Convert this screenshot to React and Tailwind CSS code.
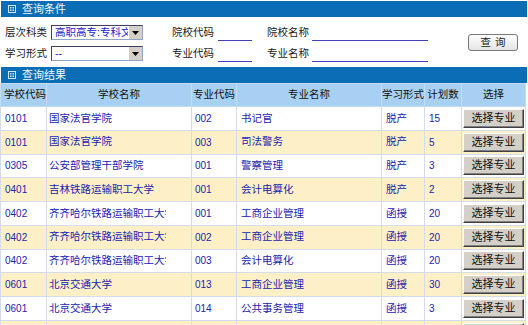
import React from "react";

const rows = [
  ["0101", "国家法官学院", "002", "书记官", "脱产", "15"],
  ["0101", "国家法官学院", "003", "司法警务", "脱产", "5"],
  ["0305", "公安部管理干部学院", "001", "警察管理", "脱产", "3"],
  ["0401", "吉林铁路运输职工大学", "001", "会计电算化", "脱产", "2"],
  ["0402", "齐齐哈尔铁路运输职工大学", "001", "工商企业管理", "函授", "20"],
  ["0402", "齐齐哈尔铁路运输职工大学", "002", "工商企业管理", "函授", "20"],
  ["0402", "齐齐哈尔铁路运输职工大学", "003", "会计电算化", "函授", "20"],
  ["0601", "北京交通大学", "013", "工商企业管理", "函授", "30"],
  ["0601", "北京交通大学", "014", "公共事务管理", "函授", "3"],
  ["0601", "北京交通大学", "015", "工商企业管理", "函授", "3"],
];

function BoxIcon() {
  return (
    <svg width="8" height="8" viewBox="0 0 8 8" className="shrink-0">
      <rect x="0.5" y="0.5" width="7" height="7" fill="none" stroke="#cfe3f5" strokeWidth="1" />
      <rect x="2" y="2" width="4" height="4" fill="#cfe3f5" />
      <line x1="4" y1="1" x2="4" y2="7" stroke="#0a6db5" strokeWidth="1" />
      <line x1="1" y1="4" x2="7" y2="4" stroke="#0a6db5" strokeWidth="1" />
    </svg>
  );
}

function Bar({ title }) {
  return (
    <div className="mx-[1px] h-[16px] bg-[#0a6db5] flex items-center gap-[6px] pl-[7px] text-[11px] leading-none">
      <BoxIcon />
      <span className="text-[#f0f6fc]">{title}</span>
    </div>
  );
}

function Select({ value }) {
  return (
    <div className="shrink-0 w-[92px] h-[15px] border border-[#8fa6c8] border-t-[#404060] border-l-[#404060] bg-white flex items-stretch overflow-hidden">
      <div className="flex-1 overflow-hidden whitespace-nowrap text-[10.5px] leading-[13px] text-[#2020d0] pl-[3px]">
        {value}
      </div>
      <div className="w-[14px] bg-[#d4d0c8] border-l border-[#ffffff] flex items-center justify-center">
        <svg width="7" height="4" viewBox="0 0 7 4">
          <path d="M0 0 H7 L3.5 4 Z" fill="#000" />
        </svg>
      </div>
    </div>
  );
}

function Line({ w }) {
  return <div className={`${w} shrink-0 h-[16px] border-b border-[#4040c0]`} />;
}

function Label({ w, ml, children }) {
  return <span className={`${w} ${ml} shrink-0 whitespace-nowrap`}>{children}</span>;
}

export default function App() {
  return (
    <div
      className="w-[528px] h-[325px] overflow-hidden bg-white pt-[1px]"
      style={{ fontFamily: '"Liberation Sans", "Noto Sans CJK SC", sans-serif' }}
    >
      <Bar title="查询条件" />
      <div className="h-[50px] flex items-center text-[10.5px] text-[#202020]">
        <div className="flex flex-col gap-[6px] pl-[5px] pt-[2px]">
          <div className="flex items-center h-[15px]">
            <Label w="w-[46px]" ml="">层次科类</Label>
            <Select value="高职高专:专科文史" />
            <Label w="w-[46px]" ml="ml-[29px]">院校代码</Label>
            <Line w="w-[34px]" />
            <Label w="w-[45px]" ml="ml-[15px]">院校名称</Label>
            <Line w="w-[116px]" />
          </div>
          <div className="flex items-center h-[15px]">
            <Label w="w-[46px]" ml="">学习形式</Label>
            <Select value="--" />
            <Label w="w-[46px]" ml="ml-[29px]">专业代码</Label>
            <Line w="w-[34px]" />
            <Label w="w-[45px]" ml="ml-[15px]">专业名称</Label>
            <Line w="w-[116px]" />
          </div>
        </div>
        <button className="ml-[40px] w-[50px] h-[17px] rounded-[3px] border border-[#7a7a7a] bg-gradient-to-b from-[#ffffff] to-[#e4e4e4] text-[10.5px] leading-none text-[#202020] tracking-[4px] pl-[4px]">
          查询
        </button>
      </div>
      <Bar title="查询结果" />
      <table className="border-collapse table-fixed text-[10.5px]" style={{ width: 525 }}>
        <colgroup>
          <col style={{ width: 46 }} />
          <col style={{ width: 145 }} />
          <col style={{ width: 45 }} />
          <col style={{ width: 145 }} />
          <col style={{ width: 43 }} />
          <col style={{ width: 37 }} />
          <col style={{ width: 64 }} />
        </colgroup>
        <thead>
          <tr className="h-[23px] bg-[#a8d0f2] text-[#101010]">
            <th className="font-normal text-left pl-[3px] border border-[#c8daf0] whitespace-nowrap">学校代码</th>
            <th className="font-normal border border-[#c8daf0] whitespace-nowrap">学校名称</th>
            <th className="font-normal border border-[#c8daf0] whitespace-nowrap">专业代码</th>
            <th className="font-normal border border-[#c8daf0] whitespace-nowrap">专业名称</th>
            <th className="font-normal border border-[#c8daf0] whitespace-nowrap">学习形式</th>
            <th className="font-normal border border-[#c8daf0] whitespace-nowrap">计划数</th>
            <th className="font-normal border border-[#c8daf0] whitespace-nowrap">选择</th>
          </tr>
        </thead>
        <tbody>
          {rows.map((r, i) => (
            <tr key={i} className={`h-[23.75px] ${i % 2 === 0 ? "bg-white" : "bg-[#fdf0c6]"} text-[#2222b0]`}>
              <td className="border border-[#d4dcec] pl-[4px] text-[10px]">{r[0]}</td>
              <td className="border border-[#d4dcec] pl-[2px]">
                <div className="w-[117px] whitespace-nowrap overflow-hidden">{r[1]}</div>
              </td>
              <td className="border border-[#d4dcec] pl-[3px] text-[10px]">{r[2]}</td>
              <td className="border border-[#d4dcec] pl-[4px] whitespace-nowrap overflow-hidden">{r[3]}</td>
              <td className="border border-[#d4dcec] pl-[4px] whitespace-nowrap">{r[4]}</td>
              <td className="border border-[#d4dcec] pl-[4px] text-[10px]">{r[5]}</td>
              <td className="border border-[#d4dcec] pl-[1px]">
                <div className="w-[61px] h-[19px] bg-[#d4d0c8] border border-t-white border-l-white border-r-[#404040] border-b-[#404040] shadow-[inset_-1px_-1px_0_#808080] flex items-center justify-center text-[11px] text-[#101010] leading-none">
                  选择专业
                </div>
              </td>
            </tr>
          ))}
        </tbody>
      </table>
    </div>
  );
}
